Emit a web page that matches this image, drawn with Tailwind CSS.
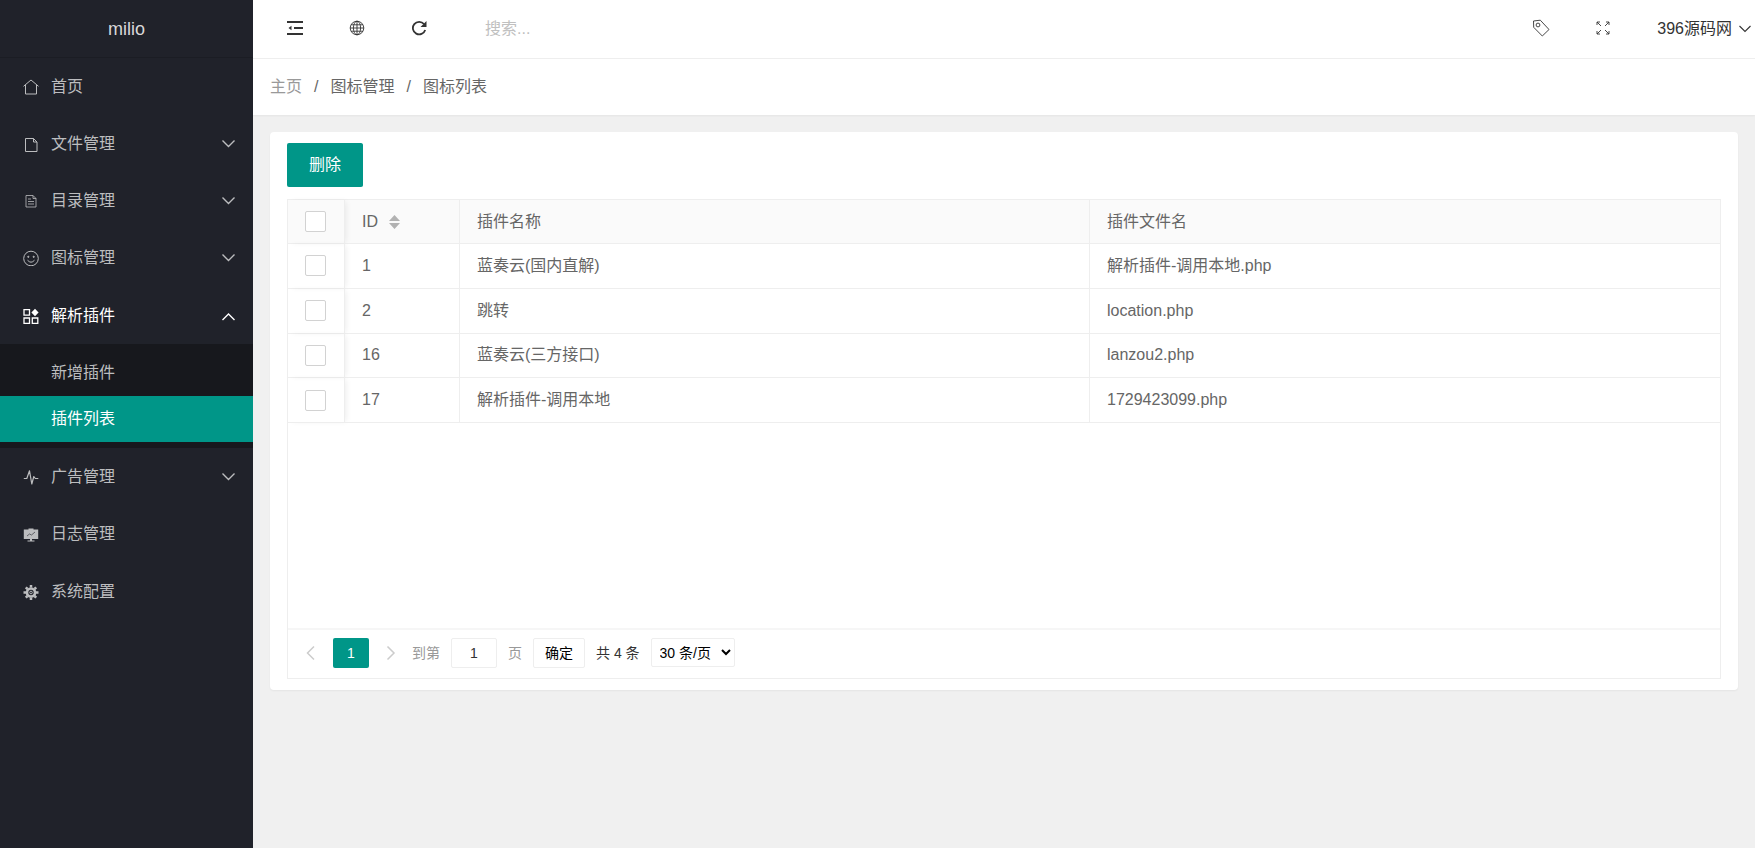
<!DOCTYPE html>
<html lang="zh-CN">
<head>
<meta charset="utf-8">
<meta name="viewport" content="width=device-width, initial-scale=1">
<title>milio</title>
<script src="https://cdn.jsdelivr.net/npm/@tailwindcss/browser@4"></script>
</head>
<body class="flex min-h-screen bg-[#f0f0f0] font-['Liberation_Sans','Noto_Sans_CJK_SC',sans-serif] text-base text-[#666]">

<aside class="w-[253px] shrink-0 bg-[#20222a] text-[#bcbdbf]">
  <div class="flex h-[58px] items-center justify-center border-b border-[#1b1d24] text-lg text-[#d8d8d9]">milio</div>
  <nav aria-label="主菜单">
    <a href="#" class="flex h-[57px] items-center gap-[12px] pr-[17px] pl-[23px]">
      <svg class="size-4" viewBox="0 0 16 16" fill="none" stroke="currentColor"><path d="M.5 7.3 8 1l7.5 6.3M2.5 6v9h11V6"/></svg>
      <span class="flex-1">首页</span>
    </a>
    <a href="#" class="flex h-[57px] items-center gap-[12px] pr-[17px] pl-[23px]">
      <svg class="size-4" viewBox="0 0 16 16" fill="none" stroke="currentColor"><path d="M2.5 2.5h8l3.5 3.5v9.500H2.500zM10.500 2.500v3.500H14"/></svg>
      <span class="flex-1">文件管理</span>
      <svg class="h-4 w-[15px]" viewBox="0 0 15 16" fill="none" stroke="currentColor" stroke-width="1.400"><path d="m1.500 4.500 6 6 6-6"/></svg>
    </a>
    <a href="#" class="flex h-[57px] items-center gap-[12px] pr-[17px] pl-[23px]">
      <svg class="size-4" viewBox="0 0 16 16" fill="none" stroke="currentColor" stroke-width=".8"><path d="M3 2.500h7l3 3v8.500H3zM10 2.500v3h3M5 6h3M5 8.500h6M5 11h6"/></svg>
      <span class="flex-1">目录管理</span>
      <svg class="h-4 w-[15px]" viewBox="0 0 15 16" fill="none" stroke="currentColor" stroke-width="1.400"><path d="m1.500 4.500 6 6 6-6"/></svg>
    </a>
    <a href="#" class="flex h-[58px] items-center gap-[12px] pr-[17px] pl-[23px]">
      <svg class="size-4" viewBox="0 0 16 16" fill="none" stroke="currentColor"><circle cx="8" cy="8.500" r="7.300"/><path d="M4.500 10.200q3.500 4 7 0"/><circle cx="5.300" cy="6.800" r=".6" fill="currentColor"/><circle cx="10.700" cy="6.800" r=".6" fill="currentColor"/></svg>
      <span class="flex-1">图标管理</span>
      <svg class="h-4 w-[15px]" viewBox="0 0 15 16" fill="none" stroke="currentColor" stroke-width="1.400"><path d="m1.500 4.500 6 6 6-6"/></svg>
    </a>
    <a href="#" aria-expanded="true" class="flex h-[57px] items-center gap-[12px] pr-[17px] pl-[23px] text-white">
      <svg class="size-4" viewBox="0 0 16 16" fill="none" stroke="currentColor" stroke-width="1.300"><path d="M1 1.700h5.500v5.500H1zM1 10h5.500v5.500H1zM9.300 10h5.500v5.500H9.300z"/><path d="m12 .8 3.600 3.700L12 8.200 8.400 4.500z" fill="currentColor" stroke="none"/></svg>
      <span class="flex-1">解析插件</span>
      <svg class="h-4 w-[15px]" viewBox="0 0 15 16" fill="none" stroke="currentColor" stroke-width="1.400"><path d="m1.500 12 6-6 6 6"/></svg>
    </a>
    <div class="bg-[#17181d] py-[6px]">
      <a href="#" class="flex h-[46px] items-center pl-[51px]">新增插件</a>
      <a href="#" aria-current="page" class="flex h-[46px] items-center bg-[#009688] pl-[51px] text-white">插件列表</a>
    </div>
    <a href="#" class="flex h-[57px] items-center gap-[12px] pr-[17px] pl-[23px]">
      <svg class="size-4" viewBox="0 0 16 16" fill="none" stroke="currentColor" stroke-width="1.200" stroke-linejoin="round"><path d="M.8 9.500h3L6.500 1.800 8.800 15l2-7.500L12.300 9.500h3"/></svg>
      <span class="flex-1">广告管理</span>
      <svg class="h-4 w-[15px]" viewBox="0 0 15 16" fill="none" stroke="currentColor" stroke-width="1.400"><path d="m1.500 4.500 6 6 6-6"/></svg>
    </a>
    <a href="#" class="flex h-[58px] items-center gap-[12px] pr-[17px] pl-[23px]">
      <svg class="size-4" viewBox="0 0 16 16" fill="currentColor"><path d="M5.500 2.500h5v1h4.700V13H9v1.500h2.500v1h-7v-1H7V13H.8V3.500h4.700z"/><path d="m4 10 2.500-2 2 1L12 6" fill="none" stroke="#20222a" stroke-width=".6"/></svg>
      <span class="flex-1">日志管理</span>
    </a>
    <a href="#" class="flex h-[57px] items-center gap-[12px] pr-[17px] pl-[23px]">
      <svg class="size-4" viewBox="0 0 16 16" fill="none" stroke="currentColor"><circle cx="8" cy="8.500" r="4" stroke-width="2.600"/><circle cx="8" cy="8.500" r="1.300" stroke-width=".9"/><path stroke-width="2.500" d="M8 1v2.500M8 13.500V16M.5 8.500H3M13 8.500h2.500M2.800 3.300l1.700 1.700M11.500 12l1.700 1.700M13.200 3.300 11.500 5M4.500 12l-1.700 1.700"/></svg>
      <span class="flex-1">系统配置</span>
    </a>
  </nav>
</aside>

<div class="flex min-w-0 flex-1 flex-col">
  <header class="flex h-[59px] items-center border-b border-[#eee] bg-white pl-[11px] text-[#333]">
    <button type="button" aria-label="收起菜单" class="flex h-[58px] w-[62px] items-center justify-center pb-[2px]">
      <svg class="size-4" viewBox="0 0 16 16" fill="none" stroke="currentColor" stroke-width="1.900"><path d="M0 2h16M7 8h9M0 14h16"/><path d="M4.500 5.800v4.400L1.500 8z" fill="currentColor" stroke="none"/></svg>
    </button>
    <button type="button" aria-label="网站" class="flex h-[58px] w-[62px] items-center justify-center pb-[2px]">
      <svg class="size-4" viewBox="0 0 16 16" fill="none" stroke="currentColor" stroke-width=".9"><circle cx="8" cy="8" r="6.800"/><ellipse cx="8" cy="8" rx="3.600" ry="6.800"/><path d="M8 1v14M1 8h14M2 4.800h12M2 11.200h12"/></svg>
    </button>
    <button type="button" aria-label="刷新" class="flex h-[58px] w-[62px] items-center justify-center pb-[2px]">
      <svg class="size-4" viewBox="0 0 16 16" fill="none" stroke="currentColor" stroke-width="1.800"><path d="M13 4A6.300 6.300 0 1 0 14.200 10"/><path d="M15.500 1v6H9.500z" fill="currentColor" stroke="none"/></svg>
    </button>
    <input type="text" aria-label="搜索" placeholder="搜索..." class="ml-[35px] h-10 w-[200px] outline-none placeholder:text-[#c0c0c0]">
    <div class="ml-auto flex items-center">
      <button type="button" aria-label="标签" class="flex h-[58px] w-[62px] items-center justify-center pb-[2px]">
        <svg class="size-[18px]" viewBox="0 0 18 18" fill="none" stroke="currentColor" stroke-width=".9" stroke-linejoin="round"><path d="m1.500 2 6.800-.8L17 10.500 10.300 17 1.700 8.300z"/><circle cx="6" cy="6" r="1.900"/></svg>
      </button>
      <button type="button" aria-label="全屏" class="flex h-[58px] w-[62px] items-center justify-center pb-[2px]">
        <svg class="size-4" viewBox="0 0 16 16" fill="none" stroke="currentColor" stroke-width=".9"><path d="m2 2 4 4M2 5V2h3M14 2l-4 4M11 2h3v3M2 14l4-4M2 11v3h3M14 14l-4-4M14 11v3h-3"/></svg>
      </button>
      <button type="button" class="ml-[23px] flex h-[58px] items-center gap-[6px] pr-[2px]">396源码网
        <svg class="h-4 w-[15px]" viewBox="0 0 15 16" fill="none" stroke="currentColor" stroke-width="1.100"><path d="m1.500 5 5.500 5.500L12.500 5"/></svg>
      </button>
    </div>
  </header>

  <nav aria-label="面包屑" class="flex h-[56px] items-center gap-[12px] bg-white px-[17px] shadow-[0_1px_2px_0_rgba(0,0,0,0.05)]">
    <a href="#" class="text-[#999]">主页</a><span>/</span><a href="#">图标管理</a><span>/</span><span>图标列表</span>
  </nav>

  <main class="p-[17px]">
    <section class="rounded-sm bg-white px-[17px] py-[11px] shadow-[0_1px_2px_0_rgba(0,0,0,0.05)]">
      <button type="button" class="h-[44px] rounded-[2px] bg-[#009688] px-[22px] text-white">删除</button>

      <div class="mt-[12px] border border-[#eee]">
        <div class="min-h-[428px]">
          <table class="h-[223px] w-full table-fixed border-separate border-spacing-0 text-left">
            <colgroup><col class="w-[57px]"><col class="w-[115px]"><col><col></colgroup>
            <thead class="bg-[#fafafa]">
              <tr class="h-[44px]">
                <th class="border-r border-b border-[#eee] p-0 shadow-[3px_0_6px_-2px_rgba(0,0,0,0.08)]"><input type="checkbox" aria-label="全选" class="ml-[17px] block size-[21px] appearance-none rounded-[2px] border border-[#d2d2d2] bg-white checked:bg-[#009688]"></th>
                <th class="border-r border-b border-[#eee] px-[17px] py-0 font-normal"><span class="flex items-center gap-[11px]">ID
                  <button type="button" aria-label="按 ID 排序"><svg class="h-[14px] w-[11px] text-[#b2b2b2]" viewBox="0 0 11 14" fill="currentColor"><path d="M5.500 0 11 6H0zM0 8h11l-5.500 6z"/></svg></button></span></th>
                <th class="border-r border-b border-[#eee] px-[17px] py-0 font-normal">插件名称</th>
                <th class="border-b border-[#eee] px-[17px] py-0 font-normal">插件文件名</th>
              </tr>
            </thead>
            <tbody>
              <tr>
                <td class="border-r border-b border-[#eee] p-0 shadow-[3px_0_6px_-2px_rgba(0,0,0,0.08)]"><input type="checkbox" aria-label="选择 1" class="ml-[17px] block size-[21px] appearance-none rounded-[2px] border border-[#d2d2d2] bg-white checked:bg-[#009688]"></td>
                <td class="border-r border-b border-[#eee] px-[17px] py-0">1</td>
                <td class="border-r border-b border-[#eee] px-[17px] py-0">蓝奏云(国内直解)</td>
                <td class="border-b border-[#eee] px-[17px] py-0">解析插件-调用本地.php</td>
              </tr>
              <tr>
                <td class="border-r border-b border-[#eee] p-0 shadow-[3px_0_6px_-2px_rgba(0,0,0,0.08)]"><input type="checkbox" aria-label="选择 2" class="ml-[17px] block size-[21px] appearance-none rounded-[2px] border border-[#d2d2d2] bg-white checked:bg-[#009688]"></td>
                <td class="border-r border-b border-[#eee] px-[17px] py-0">2</td>
                <td class="border-r border-b border-[#eee] px-[17px] py-0">跳转</td>
                <td class="border-b border-[#eee] px-[17px] py-0">location.php</td>
              </tr>
              <tr>
                <td class="border-r border-b border-[#eee] p-0 shadow-[3px_0_6px_-2px_rgba(0,0,0,0.08)]"><input type="checkbox" aria-label="选择 16" class="ml-[17px] block size-[21px] appearance-none rounded-[2px] border border-[#d2d2d2] bg-white checked:bg-[#009688]"></td>
                <td class="border-r border-b border-[#eee] px-[17px] py-0">16</td>
                <td class="border-r border-b border-[#eee] px-[17px] py-0">蓝奏云(三方接口)</td>
                <td class="border-b border-[#eee] px-[17px] py-0">lanzou2.php</td>
              </tr>
              <tr>
                <td class="border-r border-b border-[#eee] p-0 shadow-[3px_0_6px_-2px_rgba(0,0,0,0.08)]"><input type="checkbox" aria-label="选择 17" class="ml-[17px] block size-[21px] appearance-none rounded-[2px] border border-[#d2d2d2] bg-white checked:bg-[#009688]"></td>
                <td class="border-r border-b border-[#eee] px-[17px] py-0">17</td>
                <td class="border-r border-b border-[#eee] px-[17px] py-0">解析插件-调用本地</td>
                <td class="border-b border-[#eee] px-[17px] py-0">1729423099.php</td>
              </tr>
            </tbody>
          </table>
        </div>

        <div class="flex h-[50px] items-start gap-[11px] border-t-2 border-[#f6f6f6] px-[17px] pt-2 text-sm text-[#333]">
          <div class="flex h-[30px] items-center gap-4 text-[#ccc]">
            <button type="button" aria-label="上一页"><svg class="h-4 w-3" viewBox="0 0 12 16" fill="none" stroke="currentColor" stroke-width="1.500"><path d="m9 1.500-6.500 6.500L9 14.500"/></svg></button>
            <button type="button" aria-current="page" class="h-[30px] w-[36px] rounded-[2px] bg-[#009688] text-white">1</button>
            <button type="button" aria-label="下一页"><svg class="h-4 w-3" viewBox="0 0 12 16" fill="none" stroke="currentColor" stroke-width="1.500"><path d="m2.500 1.500 6.500 6.500-6.500 6.500"/></svg></button>
          </div>
          <label for="page" class="ml-1 leading-[30px] text-[#999]">到第</label>
          <input id="page" type="text" value="1" class="h-[30px] w-[46px] rounded-[2px] border border-[#eee] text-center outline-none">
          <span class="leading-[30px] text-[#999]">页</span>
          <button type="button" class="h-[30px] rounded-[2px] border border-[#eee] px-[11px] text-black">确定</button>
          <span class="leading-[30px]">共 4 条</span>
          <select aria-label="每页条数" class="h-[29px] w-[84px] rounded-[2px] border border-[#eee] bg-white pl-1 text-black"><option>30 条/页</option></select>
        </div>
      </div>
    </section>
  </main>
</div>
</body>
</html>
